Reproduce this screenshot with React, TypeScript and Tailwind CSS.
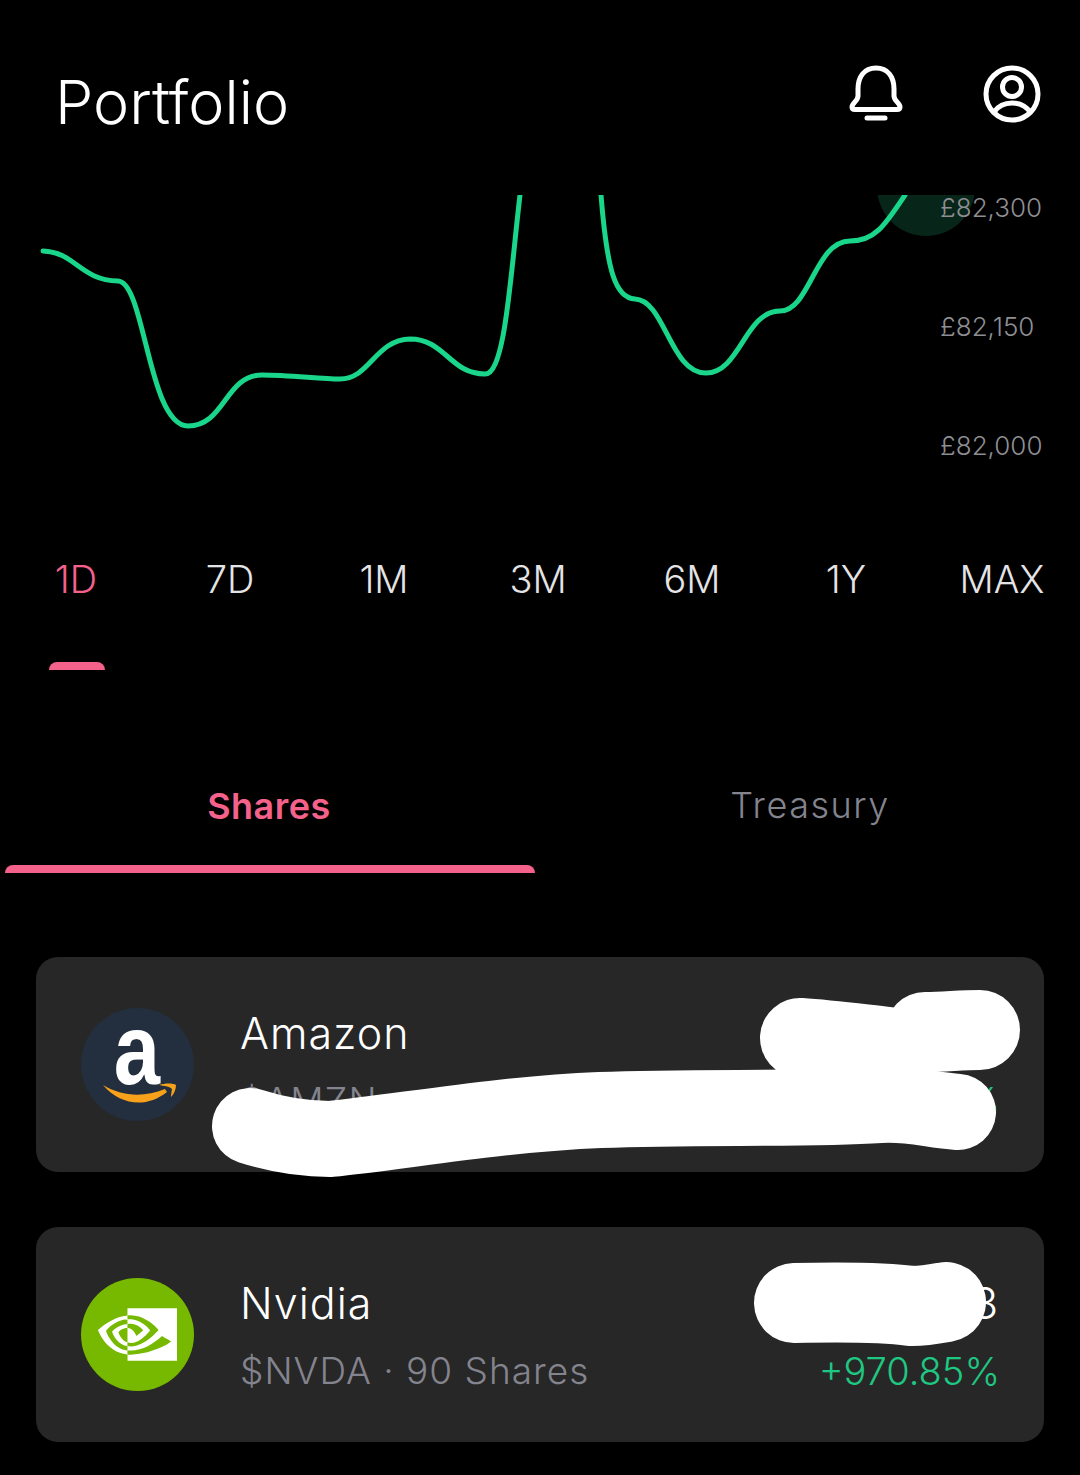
import React from "react";
import { SiNvidia } from "react-icons/si";

const ranges = ["1D", "7D", "1M", "3M", "6M", "1Y", "MAX"];

const BellIcon = () => (
  <svg width="54" height="58" viewBox="0 0 54 58" fill="none" stroke="white" strokeWidth="5" strokeLinecap="round" strokeLinejoin="round">
    <path d="M27 3C15 3 9 12 9 24V31C9 36 3 38 3 42C3 43.5 4 44.5 6 44.5H48C50 44.5 51 43.5 51 42C51 38 45 36 45 31V24C45 12 39 3 27 3Z" />
    <path d="M18 53H36" />
  </svg>
);

const ProfileIcon = () => (
  <svg width="58" height="58" viewBox="0 0 58 58" fill="none" stroke="white" strokeWidth="5" strokeLinecap="round">
    <circle cx="29" cy="29" r="26" />
    <circle cx="29" cy="22" r="9.5" />
    <path d="M11 47C16 40 22 38 29 38C36 38 42 40 47 47" />
  </svg>
);

const AmazonLogo = () => (
  <div className="w-[113px] h-[113px] shrink-0 rounded-full bg-[#232f3e]">
    <svg width="113" height="113" viewBox="0 0 113 113">
      <text transform="translate(56 76) scale(1.04 1.26)" textAnchor="middle" fill="white" fontSize="80" fontWeight="700" fontFamily="Liberation Sans, sans-serif">a</text>
      <path d="M22 77C40 88 62 90 84 81L86 84C66 100 40 98 22 77Z" fill="#f8a21b" />
      <path d="M78 77C84 75 92 75 95 77C95 81 93 86 90 89C90 85 91 82 91 81C88 78 83 78 78 77Z" fill="#f8a21b" />
    </svg>
  </div>
);

const NvidiaLogo = () => (
  <div className="flex items-center justify-center w-[113px] h-[113px] shrink-0 rounded-full bg-[#76b900]">
    <SiNvidia size={79} color="white" />
  </div>
);

const Card = ({ logo, name, sub, value, change }: { logo: React.ReactNode; name: string; sub: string; value: string; change: string }) => (
  <div className="flex items-center h-[215px] rounded-[22px] bg-[#272727] pl-[45px] pr-[46px]">
    {logo}
    <div className="ml-[46px] flex flex-col gap-[22px] pt-[5px]">
      <div className="h-[46px] text-[43px] leading-[46px] tracking-[1px] text-white font-light">{name}</div>
      <div className="h-[46px] text-[37px] leading-[46px] tracking-[1px] text-[#84848e] font-light">{sub}</div>
    </div>
    <div className="ml-auto flex flex-col items-end gap-[22px] pt-[5px]">
      <div className="h-[46px] text-[43px] leading-[46px] text-white font-light">{value}</div>
      <div className="h-[46px] -mr-[2px] text-[38px] leading-[46px] font-[350] text-[#1fc882]">{change}</div>
    </div>
  </div>
);

export default function App() {
  return (
    <div className="relative w-[1080px] h-[1475px] overflow-hidden bg-black font-['Inter',sans-serif]">
      {/* HEADER */}
      <div className="flex items-start justify-between h-[195px] pl-[55px] pr-[39px] pt-[65px]">
        <h1 className="mt-[1px] text-[61px] leading-[72px] font-light text-white">Portfolio</h1>
        <div className="flex gap-[80px]">
          <BellIcon />
          <ProfileIcon />
        </div>
      </div>

      {/* CHART */}
      <div className="relative h-[325px]">
        <svg width="1080" height="325" viewBox="0 195 1080 325" fill="none">
          <circle cx="926" cy="187" r="49" fill="#08251a" />
          <path
            d="M43 251C75 252 80 280 118 281C145 282 148 425 188 426C225 426 225 375 262 375C290 375 320 379 340 379C370 379 375 340 410 339C445 339 450 374 485 374C505 374 510 280 520 195"
            stroke="#1ad68a"
            strokeWidth="5"
            strokeLinecap="round"
          />
          <path
            d="M601 195C607 270 615 298 635 299C665 300 670 373 706 373C740 373 745 311 780 311C810 311 815 241 850 241C875 241 885 225 905 195"
            stroke="#1ad68a"
            strokeWidth="5"
            strokeLinecap="round"
          />
        </svg>
        <div className="absolute left-[940px] top-[-3px] flex flex-col gap-[87px] text-[26px] leading-[32px] font-light text-[#8e8e93]">
          <span>£82,300</span>
          <span>£82,150</span>
          <span>£82,000</span>
        </div>
      </div>

      {/* RANGE */}
      <div className="flex ml-[-1px] mt-[36px]">
        {ranges.map((r, i) => (
          <div key={r} className={`flex flex-col items-center w-[154px] shrink-0 ${i === 6 ? "ml-[2px]" : ""}`}>
            <span className={`text-[38px] leading-[46px] font-light ${i === 0 ? "text-[#f4628b]" : "text-[#e4e4e6]"}`}>{r}</span>
          </div>
        ))}
      </div>
      <div className="w-[56px] h-[8px] ml-[49px] mt-[60px] rounded-t-[8px] bg-[#f4628b]" />

      {/* TABS */}
      <div className="flex mt-[112px]">
        <div className="w-[540px] pr-[2px] text-center text-[36px] leading-[48px] tracking-[0.5px] font-semibold text-[#f4628b]">Shares</div>
        <div className="w-[540px] text-center text-[36px] leading-[46px] tracking-[1.5px] font-light text-[#84848e]">Treasury</div>
      </div>
      <div className="w-[530px] h-[8px] ml-[5px] mt-[35px] rounded-t-[8px] bg-[#f4628b]" />

      {/* CARDS */}
      <div className="flex flex-col gap-[55px] mx-[36px] mt-[84px]">
        <Card logo={<AmazonLogo />} name="Amazon" sub="$AMZN" value="" change="%" />
        <Card logo={<NvidiaLogo />} name="Nvidia" sub="$NVDA · 90 Shares" value="3" change="+970.85%" />
      </div>

      {/* white scribbles over the private values */}
      <svg className="absolute inset-0 pointer-events-none" width="1080" height="1475" viewBox="0 0 1080 1475" fill="none" stroke="white" strokeLinecap="round" strokeLinejoin="round">
        <path strokeWidth="76" d="M250 1126C275 1134 300 1139 330 1139C400 1132 500 1114 600 1110C700 1106 800 1110 880 1105C910 1103 930 1110 958 1112" />
        <path strokeWidth="80" d="M800 1038C830 1040 860 1044 888 1047" />
        <path strokeWidth="80" d="M925 1032C945 1032 960 1030 980 1030" />
        <path strokeWidth="80" d="M794 1303C840 1302 890 1303 912 1306C925 1306 935 1304 946 1302" />
      </svg>
    </div>
  );
}
